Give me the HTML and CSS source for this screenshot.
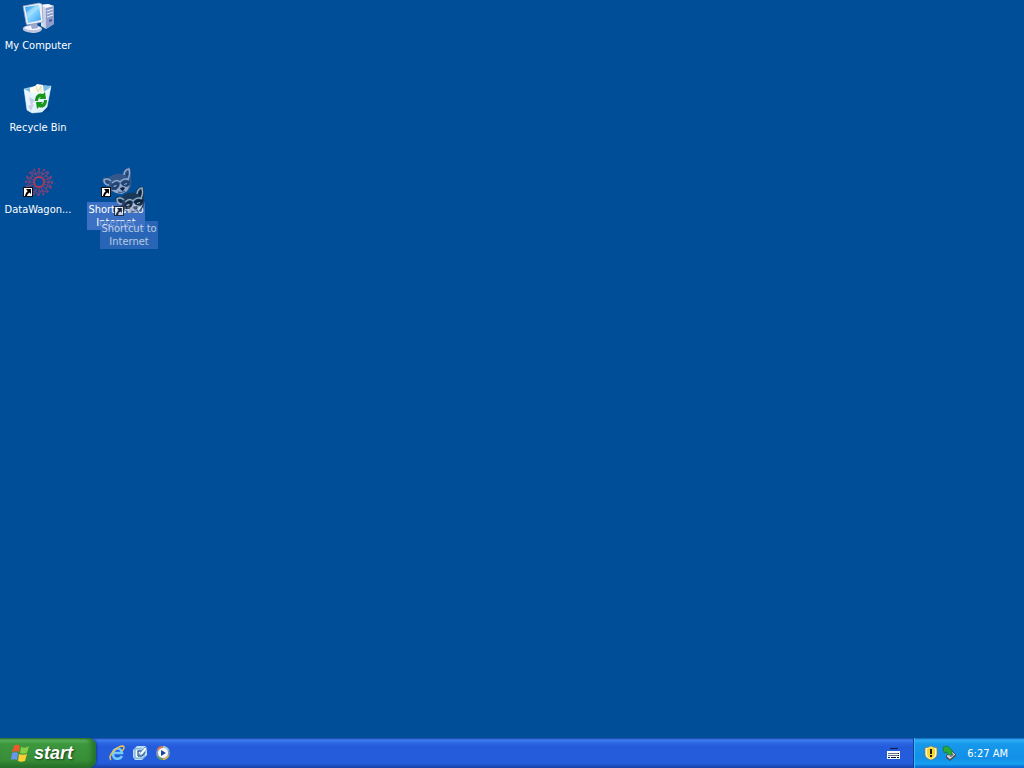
FILE: index.html
```
<!DOCTYPE html>
<html lang="en">
<head>
<meta charset="utf-8">
<meta name="viewport" content="width=device-width, initial-scale=1">
<title>Desktop</title>
<link rel="stylesheet" href="styles.css">
</head>
<body>
<svg class="defs" width="0" height="0" aria-hidden="true">
  <defs>
    <linearGradient id="screen" x1="0" y1="0" x2="1" y2="1"><stop offset="0" stop-color="#2f9bf0"/><stop offset=".5" stop-color="#83d4ff"/><stop offset="1" stop-color="#3d9cf0"/></linearGradient>
    <linearGradient id="tower" x1="0" y1="0" x2="1" y2="0"><stop offset="0" stop-color="#dfe6f4"/><stop offset="1" stop-color="#8f9cc8"/></linearGradient>
    <linearGradient id="bin" x1="0" y1="0" x2="1" y2="1"><stop offset="0" stop-color="#e8f7ff"/><stop offset=".6" stop-color="#d4ebf6"/><stop offset="1" stop-color="#8bbbe0"/></linearGradient>
    <g id="arrow">
      <rect x="1.500" y="21.500" width="9" height="9" fill="#fff" stroke="#111"/>
      <path d="M4 23h5v5L7.500 26.500C6 27.500 5.500 28 5 30H3c.3-2 1-3.500 2.700-4.800z" fill="#000"/>
    </g>
    <g id="raccoon">
      <path d="M7 13C10 9 16 7 22 8L24 4 29 1 31 4 31 13C32 18 31 23 27 26 22 29 14 28 10 24L7 19 3 17 2 13 5 11z" class="fur"/>
      <path d="M24 9C24 5 27 3 29 3 30 7 30 11 27 14M9 19C6 19 4 17 4 14 6 12 9 13 11 15" class="edge"/>
      <path d="M26 10c0-3 1-4 2-5 1 3 0 5-1 6zM6 15l3 1-1 2z" class="mask"/>
      <path d="M11 19c3-3 7-4 9-1 3-3 6-5 10-3l-1 6-6 1-3-1-3 4-5-2z" class="mask"/>
      <path d="M12 17c3-3 6-3 8-1 2-3 6-4 9-2" class="edge"/>
      <path d="M20 17l3 3 4 1 3-2-3 6-5 3-6-1-5-3 5 0 3-3z" class="pale"/>
      <path d="M13 20l3-1 1 1-3 1zM24 18l3-1v1l-3 1z" class="pale"/>
      <path d="M20 22l3-1 2 1-2 3-2-1z" fill="#10213a"/>
      <path d="M18 26c3 1 5 0 7-1" fill="none" stroke="#314e73"/>
    </g>
  </defs>
</svg>

<main class="desktop">
  <button class="shortcut" type="button">
    <svg class="shortcut-icon" viewBox="0 0 32 32" aria-hidden="true">
      <path d="M19 3l7-1 6 2v18l-8 5-5-3z" fill="url(#tower)"/>
      <path d="M24 6l8-2v18l-8 5z" fill="#8f9bc9"/>
      <path d="M25 9l6-2M25 12l6-2M25 15l6-2" stroke="#e9f0ff"/>
      <path d="M19 3l7-1 6 2-8 2z" fill="#f3f6fc"/>
      <path d="M27 18l3-1v2l-3 1z" fill="#43589c"/>
      <path d="M1 26c2-4 15-4 19 0 1 3-4 5-10 5-6-1-10-2-9-5z" fill="#bdc5df"/>
      <path d="M2 26c3-3 13-3 17 0-3 3-13 3-17 0z" fill="#f1f3fa"/>
      <path d="M8 21h7l1 5-6 1z" fill="#9ca9cc"/>
      <path d="M1 4L17 1l3 1 1 18-16 3-1-2z" fill="#eef1f8" stroke="#8795bd" stroke-width=".7"/>
      <path d="M3 5l14-2 2 15-13 3z" fill="url(#screen)"/>
      <path d="M4 11l9-7 4-1v3L5 17z" fill="#c4edff" opacity=".5"/>
    </svg>
    <span class="shortcut-label">My Computer</span>
  </button>
  <button class="shortcut" type="button">
    <svg class="shortcut-icon" viewBox="0 0 32 32" aria-hidden="true">
      <path d="M23 28l5-7v5l-5 3z" fill="#003b7c" opacity=".6"/>
      <path d="M2 5l8-2L29 2l-4 21-5 5-10 1-5-3z" fill="url(#bin)" stroke="#a8cfe6" stroke-width=".6"/>
      <path d="M2 5l7-1 14-3 6 2-7 5-13 1z" fill="#79bce2"/>
      <path d="M8 4l5-2 2-2 6 1 1 8-9 3-5-4z" fill="#fffef0"/>
      <path d="M14 2l2 6 3-6 0 6" fill="none" stroke="#ded9a9"/>
      <path d="M2 5l8 4 12-1 7-5-4 20-5 5-10 1-5-3z" fill="#eaf7ff" opacity=".75"/>
      <path d="M7 13l6 3-4 6zM6 22l6-2-3 7z" fill="#b5b3db" opacity=".6"/>
      <path d="M13 17c0-6 4-9 8-7l2-2 1 7-7 0 2-2c-2 0-3 2-3 4z" fill="#18951b"/>
      <path d="M25 16c0 6-4 9-8 7l-2 2-1-7 7 0-2 2c2 0 3-2 3-4z" fill="#18951b"/>
    </svg>
    <span class="shortcut-label">Recycle Bin</span>
  </button>
  <button class="shortcut" type="button">
    <svg class="shortcut-icon" viewBox="0 0 32 32" aria-hidden="true">
      <g fill="none" stroke="#843e72">
        <circle cx="17" cy="16" r="5" stroke="#b13a58" stroke-width="2"/>
        <circle cx="17" cy="16" r="9" stroke-dasharray="3 1"/>
        <circle cx="17" cy="16" r="13" stroke-dasharray="2 3" stroke-width="2"/>
        <path d="M17 2v9M17 21v9M3 16h9M22 16h9M7 6l7 7M20 19l7 7M27 6l-7 7M14 19l-7 7M12 3l3 8M22 3l-3 8M4 11l8 3M30 11l-8 3M4 21l8-3M30 21l-8-3M12 29l3-8M22 29l-3-8"/>
        <path d="M10 5l3 4 4-4 4 4 4-4 0 6 4 1-3 4 3 4-5 2 0 4-5-1-2 4-4-4-4 1 0-5-4-1 3-4-3-4 5-1z" stroke="#6a4b83"/>
      </g>
      <use href="#arrow"/>
    </svg>
    <span class="shortcut-label">DataWagon...</span>
  </button>
  <div class="drag-source">
    <button class="shortcut selected" type="button">
      <svg class="shortcut-icon" viewBox="0 0 32 32" aria-hidden="true"><use href="#raccoon"/><use href="#arrow"/></svg>
      <span class="shortcut-label">Shortcut to Internet</span>
    </button>
    <div class="shortcut ghost">
      <svg class="shortcut-icon" viewBox="0 0 32 32" aria-hidden="true"><use href="#raccoon"/><use href="#arrow"/></svg>
      <span class="shortcut-label">Shortcut to Internet</span>
    </div>
  </div>
</main>

<footer class="taskbar">
  <button class="start" type="button">
    <svg class="flag" viewBox="0 0 20 20" aria-hidden="true">
      <path d="M4 3c2-2 4-2 6 0L9 9c-2-1-4-1-7 0z" fill="#ed582d"/>
      <path d="M11 4c3 1 5 1 8-1l-2 7c-3 1-5 1-7 0z" fill="#83cf45"/>
      <path d="M2 10c2-1 4-1 6 0l-1 7c-2-1-4-1-6 0z" fill="#6b94f0"/>
      <path d="M9 11c3 1 5 1 8 0l-2 7c-3 1-5 1-7 0z" fill="#fccd35"/>
    </svg>
    <span>start</span>
  </button>
  <nav class="quick-launch" aria-label="Quick Launch">
    <button class="tool" type="button" aria-label="Internet Explorer">
      <svg class="tool-icon" viewBox="0 0 16 16" aria-hidden="true">
        <path d="M13 11c-2 4-9 4-9-2 0-6 8-8 9-1H5" fill="none" stroke="#74ccff" stroke-width="2.500"/>
        <path d="M2 15C-2 11 8 1 14 1c2 1 1 3-1 5" fill="none" stroke="#f1c34e" stroke-width="1.400"/>
      </svg>
    </button>
    <button class="tool" type="button" aria-label="Show Desktop">
      <svg class="tool-icon" viewBox="0 0 16 16" aria-hidden="true">
        <path d="M3 3l2-2h8l2 2v7l-3 3-2 2H3l-2-3V5z" fill="#b9def5"/>
        <path d="M3 4h7l2 2v7H3z" fill="#fff" stroke="#5c9dca"/>
        <path d="M6 11V6h4M6 11h4l3-4" fill="none" stroke="#245f98" stroke-width="1.300"/>
        <path d="M8 8l5-6 2 2-5 6-3 0z" fill="#f7fcff" stroke="#4c82af" stroke-width=".7"/>
      </svg>
    </button>
    <button class="tool" type="button" aria-label="Windows Media Player">
      <svg class="tool-icon" viewBox="0 0 16 16" aria-hidden="true">
        <circle cx="8" cy="8" r="7" fill="#8298b9"/>
        <path d="M8 8L2 4a7 7 0 0 1 6-3z" fill="#e27745"/><path d="M8 8V1a7 7 0 0 1 6 4z" fill="#a1c8e6"/><path d="M8 8l-6 4a7 7 0 0 0 6 3z" fill="#649d6c"/><path d="M8 15a7 7 0 0 0 6-4L8 8z" fill="#d1ae50"/>
        <circle cx="8" cy="8" r="5" fill="#f7faff"/><path d="M6 5l5 3-5 3z" fill="#17439e"/>
      </svg>
    </button>
  </nav>
  <button class="tool keyboard" type="button" aria-label="Keyboard">
    <svg class="tool-icon" viewBox="0 0 16 16" aria-hidden="true">
      <path d="M5 4l2-1 1 1 2-1 1 1 2-1" fill="none" stroke="#08142f"/>
      <rect x="2" y="6" width="13" height="8" fill="#f7faff"/>
      <path d="M3 8h11v1H3zM3 10h11v1H3z" fill="#08142f"/>
      <path d="M4 7v5M6 7v5M8 7v5M10 7v5M12 7v5" stroke="#f7faff" stroke-width=".8"/>
      <path d="M3 12h2v1H3zM6 12h5v1H6zM12 12h2v1h-2z" fill="#08142f"/>
    </svg>
  </button>
  <div class="tray">
    <button class="tool" type="button" aria-label="Security alert">
      <svg class="tool-icon" viewBox="0 0 16 16" aria-hidden="true">
        <path d="M8 1l2 1 4 1v6c0 3-3 5-6 6-3-1-6-3-6-6V3l4-1z" fill="#fff8c9" stroke="#857833" stroke-width=".7"/>
        <path d="M8 2l4 2v5c0 2-2 4-4 5-2-1-4-3-4-5V4z" fill="#f6d52c"/>
        <path d="M7 4h2v5H7zM7 10h2v2H7z" fill="#211b05"/>
      </svg>
    </button>
    <button class="tool" type="button" aria-label="Safely Remove Hardware">
      <svg class="tool-icon" viewBox="0 0 16 16" aria-hidden="true">
        <path d="M4 11l6-5 4 4-6 5z" fill="#d9dddd" stroke="#3e4e57"/><path d="M4 11v2l4 3 6-5v-2l-6 5z" fill="#46535b"/>
        <path d="M7 11l3-3 2 2-3 2z" fill="#6d7a81"/>
        <path d="M1 2l5-1 1 2 3 2 0 4-4 1-1-3-3 1z" fill="#28ab38" stroke="#15772b" stroke-width=".7"/>
      </svg>
    </button>
    <time class="clock" datetime="06:27">6:27 AM</time>
  </div>
</footer>
</body>
</html>
```
FILE: styles.css
```
* {
  box-sizing: border-box;
}

body {
  margin: 0;
  min-height: 100vh;
  display: flex;
  flex-direction: column;
  background: #004e98;
  color: #fff;
  font: 11px/13px "DejaVu Sans Condensed", "Noto Sans", sans-serif;
}

button {
  margin: 0;
  padding: 0;
  border: 0;
  background: none;
  color: inherit;
  font: inherit;
}

.defs {
  position: absolute;
}

.desktop {
  flex: 1;
  display: grid;
  grid-template-columns: repeat(auto-fill, 76px);
  grid-auto-rows: 82px;
  column-gap: 2px;
  align-content: start;
  padding-top: 2px;
}

.shortcut {
  grid-column: 1;
  display: flex;
  flex-direction: column;
  align-items: center;
  justify-content: flex-start;
  gap: 4px;
  width: 76px;
}

.shortcut-icon {
  width: 32px;
  height: 32px;
  flex: none;
}

.shortcut-label {
  padding: 1px 0;
  text-align: center;
  white-space: nowrap;
}

.drag-source {
  grid-column: 2;
  grid-row: 3;
  position: relative;
}

.drag-source .shortcut-label {
  width: 58px;
  background: #3b70c4;
  white-space: normal;
}

.selected {
  --fur: #35588a;
  --pale: #8ea9cf;
  --mask: #234472;
}

.ghost {
  --fur: #26303c;
  --pale: #d0d6dc;
  --mask: #0c1118;
  position: absolute;
  left: 13px;
  top: 19px;
  opacity: 0.7;
}

.fur {
  fill: var(--fur);
}

.pale {
  fill: var(--pale);
}

.mask {
  fill: var(--mask);
}

.edge {
  fill: none;
  stroke: var(--pale);
  stroke-width: 1.5;
}

.taskbar {
  display: flex;
  align-items: stretch;
  height: 30px;
  background: linear-gradient(#1941a5 0, #3b80f0 2px, #2c66e2 5px, #245bdb 9px, #245edc 25px, #1941a5 30px);
}

.start {
  display: flex;
  align-items: center;
  gap: 4px;
  width: 96px;
  padding-left: 10px;
  border-radius: 0 8px 8px 0;
  background: linear-gradient(#2b7431 0, #62b762 2px, #3d973d 6px, #378e37 22px, #256d29 30px);
  box-shadow: inset -4px 0 5px #237329, 1px 0 2px #173d93;
  font: italic bold 18px/24px "Liberation Sans", Arial, sans-serif;
  text-shadow: 1px 1px 2px #173f18;
}

.flag {
  width: 20px;
  height: 20px;
}

.quick-launch {
  display: flex;
  align-items: center;
  gap: 7px;
  padding-left: 13px;
}

.tool {
  display: flex;
  align-items: center;
}

.tool-icon {
  width: 16px;
  height: 16px;
}

.keyboard {
  margin-left: auto;
  margin-right: 12px;
}

.tray {
  display: flex;
  align-items: center;
  gap: 3px;
  padding: 0 16px 0 9px;
  border-left: 1px solid #103f9f;
  background: linear-gradient(#0c59b9 0, #31b0f7 2px, #1798ea 6px, #128fe8 20px, #14a0ef 26px, #095bc9 30px);
  box-shadow: inset 1px 0 1px #38bcf6;
}

.clock {
  padding-left: 6px;
}
```
